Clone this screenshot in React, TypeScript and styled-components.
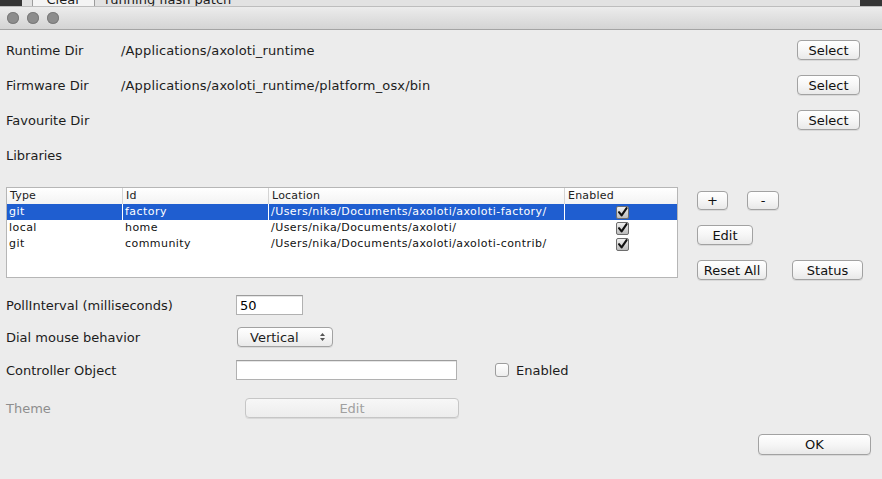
import React from "react";
import styled, { createGlobalStyle } from "styled-components";

const GlobalStyle = createGlobalStyle`
  html, body {
    margin: 0;
    padding: 0;
  }
  body {
    background: #ececec;
    font-family: "DejaVu Sans", "Liberation Sans", sans-serif;
    font-size: 13px;
    color: #1c1c1c;
    overflow: hidden;
  }
  * {
    box-sizing: border-box;
  }
`;

const Screen = styled.div`
  width: 882px;
  height: 479px;
  display: flex;
  flex-direction: column;
  background: #ececec;
  overflow: hidden;
`;

// the window sitting behind the dialog, only its bottom edge shows
const BackWindow = styled.div`
  height: 7px;
  flex: none;
  display: flex;
  align-items: flex-end;
  background: #e2e2e2;
  border-bottom: 1px solid #bdbdbd;
  overflow: hidden;
`;

const DarkEdge = styled.div<{ $w: number }>`
  width: ${(p) => p.$w}px;
  height: 100%;
  background: #363636;
  flex: none;
`;

const BackButton = styled.div`
  flex: none;
  width: 63px;
  height: 20px;
  margin-left: 10px;
  margin-bottom: -1px;
  padding-top: 6px;
  border: 1px solid #9c9c9c;
  border-top: none;
  background: #f4f4f4;
  text-align: center;
  line-height: 13px;
  font-size: 13px;
`;

const BackText = styled.div`
  flex: 1;
  margin-left: 10px;
  height: 20px;
  padding-top: 6px;
  line-height: 13px;
  font-size: 13px;
  margin-bottom: -1px;
`;

const TitleBar = styled.div`
  height: 23px;
  flex: none;
  display: flex;
  align-items: center;
  gap: 8px;
  padding: 0 0 1px 7px;
  background: linear-gradient(#ececec, #d4d4d4);
  border-bottom: 1px solid #a4a4a4;
`;

const Light = styled.span`
  width: 12px;
  height: 12px;
  border-radius: 50%;
  background: #8d8d8d;
  box-shadow: inset 0 0 0 1px #7c7c7c;
`;

const Content = styled.div`
  flex: 1;
  display: flex;
  flex-direction: column;
  padding: 10px 11px 0 6px;
`;

const DirList = styled.div`
  display: flex;
  flex-direction: column;
  gap: 15px;
  padding-right: 11px;
`;

const DirRow = styled.div`
  display: grid;
  grid-template-columns: 115px 1fr auto;
  align-items: center;
  height: 20px;
`;

const Label = styled.span<{ $muted?: boolean }>`
  color: ${(p) => (p.$muted ? "#8e8e8e" : "#1c1c1c")};
  white-space: nowrap;
`;

const PathText = styled(Label)`
  letter-spacing: 0.15px;
`;

const Button = styled.button<{ $w: number; $h?: number }>`
  width: ${(p) => p.$w}px;
  height: ${(p) => p.$h ?? 20}px;
  padding: 0;
  font-family: inherit;
  font-size: 13px;
  color: #111;
  border: 1px solid #a2a2a2;
  border-radius: 4px;
  background: linear-gradient(#ffffff, #f6f6f6 50%, #e9e9e9);
  box-shadow: 0 1px 0 rgba(0, 0, 0, 0.08);
  line-height: 1;
  &:disabled {
    color: #a0a0a0;
    border-color: #c6c6c6;
    background: linear-gradient(#f7f7f7, #ededed);
  }
`;

const TableArea = styled.div`
  display: flex;
  gap: 19px;
  margin-top: 22px;
`;

const Table = styled.div`
  width: 672px;
  height: 91px;
  flex: none;
  border: 1px solid #b6b6b6;
  background: #fff;
  font-size: 11px;
  letter-spacing: 0.45px;
`;

const cols = "115px 146px 296px 1fr";

const HeadRow = styled.div`
  display: grid;
  grid-template-columns: ${cols};
  height: 16px;
  background: linear-gradient(#ffffff, #f3f3f3);
`;

const HeadCell = styled.div<{ $first?: boolean }>`
  padding-left: 3px;
  line-height: 16px;
  border-left: ${(p) => (p.$first ? "none" : "1px solid #d4d4d4")};
  color: #222;
  letter-spacing: 0.2px;
`;

const Row = styled.div<{ $selected?: boolean }>`
  display: grid;
  grid-template-columns: ${cols};
  height: 16px;
  background: ${(p) => (p.$selected ? "#1f5ed0" : "transparent")};
  color: ${(p) => (p.$selected ? "#fff" : "#111")};
`;

const Cell = styled.div<{ $first?: boolean; $selected?: boolean; $center?: boolean }>`
  padding-left: 2px;
  line-height: 16px;
  white-space: nowrap;
  overflow: hidden;
  border-left: ${(p) =>
    p.$first ? "none" : p.$selected ? "1px solid #ffffff" : "1px solid transparent"};
  display: ${(p) => (p.$center ? "flex" : "block")};
  align-items: center;
  justify-content: center;
`;

const SideButtons = styled.div`
  display: flex;
  flex-direction: column;
  gap: 15px;
  padding-top: 4px;
`;

const ButtonRow = styled.div<{ $gap: number }>`
  display: flex;
  gap: ${(p) => p.$gap}px;
`;

const Form = styled.div`
  display: flex;
  flex-direction: column;
  margin-top: 15px;
`;

const FormRow = styled.div<{ $top?: number }>`
  display: grid;
  grid-template-columns: 230px auto auto 1fr;
  align-items: center;
  height: 20px;
  margin-top: ${(p) => p.$top ?? 0}px;
`;

const TextInput = styled.input<{ $w: number }>`
  width: ${(p) => p.$w}px;
  height: 20px;
  border: 1px solid #b1b1b1;
  border-top-color: #9c9c9c;
  background: #fff;
  box-shadow: inset 0 1px 0 #e6e6e6;
  font-family: inherit;
  font-size: 13px;
  padding: 0 3px;
  outline: none;
`;

const SelectBox = styled.div`
  width: 96px;
  height: 20px;
  margin-left: 1px;
  display: flex;
  align-items: center;
  padding: 0 6px 0 12px;
  border: 1px solid #a2a2a2;
  border-radius: 4px;
  background: linear-gradient(#ffffff, #f6f6f6 50%, #e9e9e9);
  box-shadow: 0 1px 0 rgba(0, 0, 0, 0.08);
`;

const SelectText = styled.span`
  flex: 1;
`;

const CheckLabel = styled.label`
  display: flex;
  align-items: center;
  gap: 7px;
  margin-left: 38px;
`;

const Box = styled.span`
  width: 14px;
  height: 14px;
  border: 1px solid #9d9d9d;
  border-radius: 3px;
  background: linear-gradient(#ffffff, #ededed);
`;

const DisabledWrap = styled.div`
  margin-left: 9px;
`;

const Footer = styled.div`
  display: flex;
  justify-content: flex-end;
  margin-top: 16px;
`;

const TableCheck = () => (
  <svg width="13" height="13" viewBox="0 0 13 13">
    <defs>
      <linearGradient id="cb" x1="0" y1="0" x2="0" y2="1">
        <stop offset="0" stopColor="#f2f2f2" />
        <stop offset="1" stopColor="#b9b9b9" />
      </linearGradient>
    </defs>
    <rect x="0.5" y="0.5" width="12" height="12" rx="1.5" fill="url(#cb)" stroke="#6d6d6d" />
    <path d="M3 6.2 L5.6 9.4 L10.6 2.2" fill="none" stroke="#111" strokeWidth="2.1" strokeLinecap="round" strokeLinejoin="round" />
  </svg>
);

const Spinner = () => (
  <svg width="7" height="10" viewBox="0 0 7 10">
    <path d="M1 4 L3.5 1 L6 4 Z M1 6 L3.5 9 L6 6 Z" fill="#555" />
  </svg>
);

const libraries = [
  { type: "git", id: "factory", location: "/Users/nika/Documents/axoloti/axoloti-factory/", selected: true },
  { type: "local", id: "home", location: "/Users/nika/Documents/axoloti/", selected: false },
  { type: "git", id: "community", location: "/Users/nika/Documents/axoloti/axoloti-contrib/", selected: false },
];

const dirs = [
  { label: "Runtime Dir", value: "/Applications/axoloti_runtime" },
  { label: "Firmware Dir", value: "/Applications/axoloti_runtime/platform_osx/bin" },
  { label: "Favourite Dir", value: "" },
];

const App = () => {
  return (
    <Screen>
      <GlobalStyle />
      <BackWindow>
        <DarkEdge $w={22} />
        <BackButton>Clear</BackButton>
        <BackText>running flash patch</BackText>
        <DarkEdge $w={22} />
      </BackWindow>
      <TitleBar>
        <Light />
        <Light />
        <Light />
      </TitleBar>
      <Content>
        <DirList>
          {dirs.map((d) => (
            <DirRow key={d.label}>
              <Label>{d.label}</Label>
              <PathText>{d.value}</PathText>
              <Button $w={63}>Select</Button>
            </DirRow>
          ))}
          <DirRow>
            <Label>Libraries</Label>
          </DirRow>
        </DirList>

        <TableArea>
          <Table>
            <HeadRow>
              <HeadCell $first>Type</HeadCell>
              <HeadCell>Id</HeadCell>
              <HeadCell>Location</HeadCell>
              <HeadCell>Enabled</HeadCell>
            </HeadRow>
            {libraries.map((lib) => (
              <Row key={lib.id} $selected={lib.selected}>
                <Cell $first>{lib.type}</Cell>
                <Cell $selected={lib.selected}>{lib.id}</Cell>
                <Cell $selected={lib.selected}>{lib.location}</Cell>
                <Cell $selected={lib.selected} $center>
                  <TableCheck />
                </Cell>
              </Row>
            ))}
          </Table>
          <SideButtons>
            <ButtonRow $gap={19}>
              <Button $w={31} $h={19}>+</Button>
              <Button $w={32} $h={19}>-</Button>
            </ButtonRow>
            <ButtonRow $gap={0}>
              <Button $w={56}>Edit</Button>
            </ButtonRow>
            <ButtonRow $gap={25}>
              <Button $w={70}>Reset All</Button>
              <Button $w={71}>Status</Button>
            </ButtonRow>
          </SideButtons>
        </TableArea>

        <Form>
          <FormRow>
            <Label>PollInterval (milliseconds)</Label>
            <TextInput $w={67} defaultValue="50" />
          </FormRow>
          <FormRow $top={12}>
            <Label>Dial mouse behavior</Label>
            <SelectBox>
              <SelectText>Vertical</SelectText>
              <Spinner />
            </SelectBox>
          </FormRow>
          <FormRow $top={13}>
            <Label>Controller Object</Label>
            <TextInput $w={221} />
            <CheckLabel>
              <Box />
              <Label>Enabled</Label>
            </CheckLabel>
          </FormRow>
          <FormRow $top={18}>
            <Label $muted>Theme</Label>
            <DisabledWrap>
              <Button $w={214} disabled>
                Edit
              </Button>
            </DisabledWrap>
          </FormRow>
        </Form>

        <Footer>
          <Button $w={113} $h={21}>OK</Button>
        </Footer>
      </Content>
    </Screen>
  );
};

export default App;
